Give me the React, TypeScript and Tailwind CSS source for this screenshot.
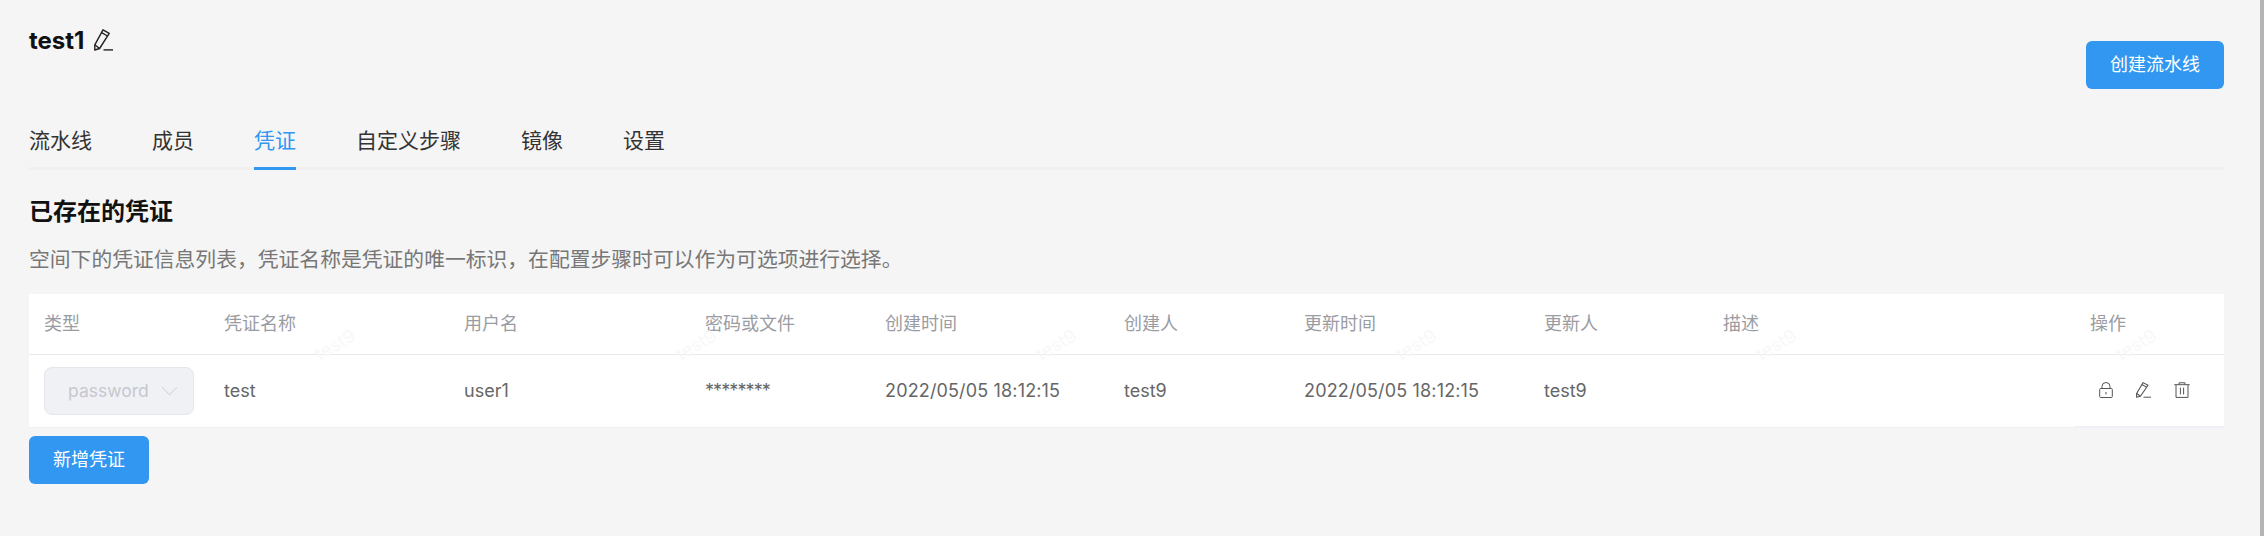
const cols = [179, 240, 241, 180, 239, 180, 240, 179, 367, 150];
const heads = ["类型", "凭证名称", "用户名", "密码或文件", "创建时间", "创建人", "更新时间", "更新人", "描述", "操作"];
const marks = [314, 675, 1035, 1395, 1755, 2115];

function PencilIcon({ className }: { className: string }) {
  return (
    <svg viewBox="0 0 19 22" preserveAspectRatio="none" fill="none" stroke="currentColor" strokeWidth="1.4" className={className}>
      <path d="M9 0.8 15.2 4.4 5.6 19.5 0.8 21 0.8 15.8z" strokeLinejoin="round" />
      <path d="M7.3 3.4 13.4 7M0.8 15.8l4.8 3.7" />
      <path d="M9.5 20.9H19" />
    </svg>
  );
}

function LockIcon({ className }: { className: string }) {
  return (
    <svg viewBox="0 0 14 16" fill="none" stroke="currentColor" strokeWidth="1" className={className}>
      <rect x="0.7" y="6.5" width="12.6" height="9" rx="1" />
      <path d="M3 6.5V4.5a4 4 0 0 1 8 0v2" />
      <path d="M7 10v2.4" />
    </svg>
  );
}

function TrashIcon({ className }: { className: string }) {
  return (
    <svg viewBox="0 0 16 16" fill="none" stroke="currentColor" strokeWidth="1" className={className}>
      <path d="M0.3 2.7H15.7M5 2.7V0.8H11V2.7M2 2.7V15.4H14V2.7M6.4 5.6V12.4M9.6 5.6V12.4" />
    </svg>
  );
}

export default function App() {
  return (
    <div className="relative h-[536px] w-[2264px] overflow-hidden bg-[#f5f5f5] font-['Inter','Noto_Sans_CJK_SC',sans-serif]">
      <div className="absolute right-0 top-0 h-full w-1 bg-[#b4b4b4]" />
      <div className="ml-[29px] w-[2195px]">
        <div className="flex h-[100px] items-start justify-between">
          <div className="mt-[29px] flex items-start gap-[10px]">
            <span className="text-2xl font-bold leading-6 text-[#111]">test1</span>
            <PencilIcon className="h-[22px] w-[19px] text-[#222]" />
          </div>
          <button className="mt-[41px] h-12 w-[138px] rounded-md bg-[#3197f0] text-lg text-white">创建流水线</button>
        </div>
        <div className="flex h-[70px] gap-[60px] border-b-[3px] border-[#f0f0f0] pt-[25px] text-[21px] leading-[32px] text-[#333]">
          <span>流水线</span>
          <span>成员</span>
          <span className="h-[45px] border-b-[3px] border-[#3197f0] text-[#3197f0]">凭证</span>
          <span>自定义步骤</span>
          <span>镜像</span>
          <span>设置</span>
        </div>
        <h2 className="mt-[24px] text-2xl font-bold leading-9 text-[#111]">已存在的凭证</h2>
        <p className="mt-[14px] text-[20.8px] leading-8 text-[#777]">
          空间下的凭证信息列表，凭证名称是凭证的唯一标识，在配置步骤时可以作为可选项进行选择。
        </p>
        <div className="relative mt-[18px]">
          <table className="w-[2195px] table-fixed border-collapse bg-white text-lg text-[#666]">
            <colgroup>
              {cols.map((w, i) => (
                <col key={i} style={{ width: w }} />
              ))}
            </colgroup>
            <thead>
              <tr className="h-[60px] border-b border-[#e9e9e9]">
                {heads.map((h) => (
                  <th key={h} className="pl-4 text-left font-normal text-[#9a9ca3] first:pl-[15px]">
                    {h}
                  </th>
                ))}
              </tr>
            </thead>
            <tbody>
              <tr className="h-[73px] border-b border-[#f0f0f0]">
                <td className="pl-[15px]">
                  <div className="flex h-12 w-[150px] items-center rounded-lg border border-[#e4e6ec] bg-[#f0f1f5] pl-[23px] text-[17.5px] text-[#c6c8ce]">
                    password
                    <svg viewBox="0 0 18 10" fill="none" stroke="currentColor" strokeWidth="1" className="ml-3 h-[10px] w-[17px]">
                      <path d="M1 1l8 8 8-8" />
                    </svg>
                  </div>
                </td>
                <td className="pl-4">test</td>
                <td className="pl-4">user1</td>
                <td className="pl-4 tracking-[-0.9px]">********</td>
                <td className="pl-4 tracking-[0.15px]">2022/05/05 18:12:15</td>
                <td className="pl-4">test9</td>
                <td className="pl-4 tracking-[0.15px]">2022/05/05 18:12:15</td>
                <td className="pl-4">test9</td>
                <td className="pl-4"></td>
                <td className="border-b-2 border-[#eef0f5]">
                  <div className="flex items-center pl-[25px] text-[#555]">
                    <LockIcon className="h-4 w-[14px]" />
                    <PencilIcon className="ml-[23px] h-4 w-[15px]" />
                    <TrashIcon className="ml-[23px] h-4 w-4" />
                  </div>
                </td>
              </tr>
            </tbody>
          </table>
          {marks.map((x) => (
            <span
              key={x}
              className="pointer-events-none absolute top-[42px] -rotate-30 text-lg leading-none text-[#f8f8f8]"
              style={{ left: x - 29 }}
            >
              test9
            </span>
          ))}
        </div>
        <button className="mt-2 h-12 w-[120px] rounded-md bg-[#3197f0] text-lg text-white">新增凭证</button>
      </div>
    </div>
  );
}
